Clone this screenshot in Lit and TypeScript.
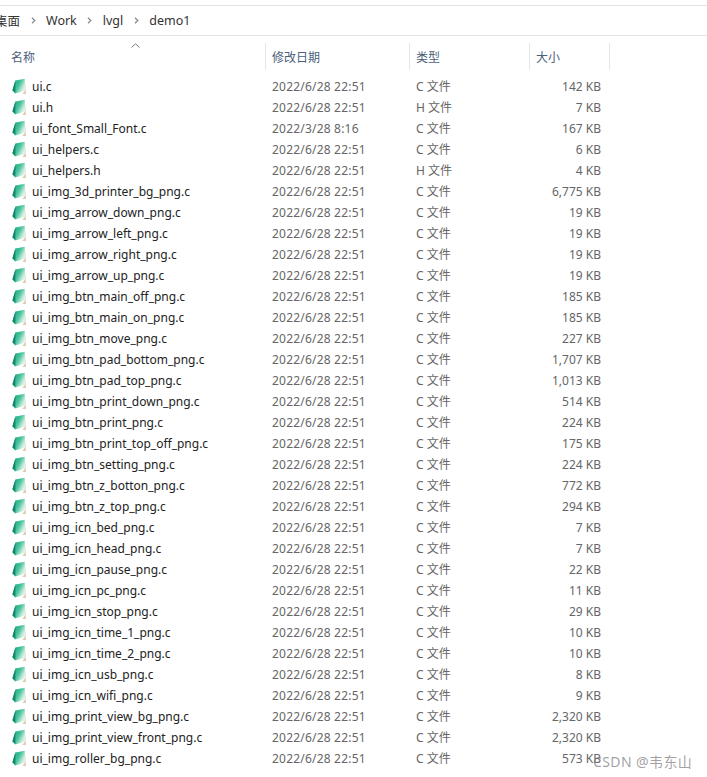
import { LitElement, html, css, svg } from "lit";
import { customElement } from "lit/decorators.js";

type Row = [string, string, string, string];
const D = "2022/6/28 22:51";
const rows: Row[] = [
  ["ui.c", D, "C 文件", "142 KB"],
  ["ui.h", D, "H 文件", "7 KB"],
  ["ui_font_Small_Font.c", "2022/3/28 8:16", "C 文件", "167 KB"],
  ["ui_helpers.c", D, "C 文件", "6 KB"],
  ["ui_helpers.h", D, "H 文件", "4 KB"],
  ["ui_img_3d_printer_bg_png.c", D, "C 文件", "6,775 KB"],
  ["ui_img_arrow_down_png.c", D, "C 文件", "19 KB"],
  ["ui_img_arrow_left_png.c", D, "C 文件", "19 KB"],
  ["ui_img_arrow_right_png.c", D, "C 文件", "19 KB"],
  ["ui_img_arrow_up_png.c", D, "C 文件", "19 KB"],
  ["ui_img_btn_main_off_png.c", D, "C 文件", "185 KB"],
  ["ui_img_btn_main_on_png.c", D, "C 文件", "185 KB"],
  ["ui_img_btn_move_png.c", D, "C 文件", "227 KB"],
  ["ui_img_btn_pad_bottom_png.c", D, "C 文件", "1,707 KB"],
  ["ui_img_btn_pad_top_png.c", D, "C 文件", "1,013 KB"],
  ["ui_img_btn_print_down_png.c", D, "C 文件", "514 KB"],
  ["ui_img_btn_print_png.c", D, "C 文件", "224 KB"],
  ["ui_img_btn_print_top_off_png.c", D, "C 文件", "175 KB"],
  ["ui_img_btn_setting_png.c", D, "C 文件", "224 KB"],
  ["ui_img_btn_z_botton_png.c", D, "C 文件", "772 KB"],
  ["ui_img_btn_z_top_png.c", D, "C 文件", "294 KB"],
  ["ui_img_icn_bed_png.c", D, "C 文件", "7 KB"],
  ["ui_img_icn_head_png.c", D, "C 文件", "7 KB"],
  ["ui_img_icn_pause_png.c", D, "C 文件", "22 KB"],
  ["ui_img_icn_pc_png.c", D, "C 文件", "11 KB"],
  ["ui_img_icn_stop_png.c", D, "C 文件", "29 KB"],
  ["ui_img_icn_time_1_png.c", D, "C 文件", "10 KB"],
  ["ui_img_icn_time_2_png.c", D, "C 文件", "10 KB"],
  ["ui_img_icn_usb_png.c", D, "C 文件", "8 KB"],
  ["ui_img_icn_wifi_png.c", D, "C 文件", "9 KB"],
  ["ui_img_print_view_bg_png.c", D, "C 文件", "2,320 KB"],
  ["ui_img_print_view_front_png.c", D, "C 文件", "2,320 KB"],
  ["ui_img_roller_bg_png.c", D, "C 文件", "573 KB"],
];

const chev = svg`<svg class="chev" width="5" height="7" viewBox="0 0 5 7"><path d="M1 .8 3.8 3.5 1 6.2" fill="none" stroke="#8a8a8a" stroke-width="1.3"/></svg>`;

const fileIcon = svg`<svg class="ico" width="15" height="17" viewBox="0 0 15 17">
  <defs><linearGradient id="g" x1="0" y1="0.3" x2="1" y2="0.9"><stop offset="0" stop-color="#17a57c"/><stop offset=".45" stop-color="#4cc6a0"/><stop offset=".75" stop-color="#c6ebdc"/><stop offset="1" stop-color="#fdfdf8"/></linearGradient></defs>
  <path d="M12.8 1.5 14 16H10.5L12.4 13Z" fill="#d9cfb4"/>
  <path d="M3.4 2.6 12.8 .8 13 12.8 3 15.4 .4 12.2Z" fill="url(#g)"/>
  <path d="M.4 12.2 3.4 2.6 3.4 15Z" fill="#15866a"/>
</svg>`;

@customElement("app-root")
export class AppRoot extends LitElement {
  static styles = css`
    :host {
      display: block;
      width: 707px;
      height: 777px;
      overflow: hidden;
      background: #fff;
      font-family: "Noto Sans", "Noto Sans CJK SC", sans-serif;
      font-size: 12px;
      color: #222;
    }
    .crumbs {
      margin-top: 5px;
      height: 29px;
      border-top: 1px solid #e3e3e3;
      border-bottom: 1px solid #e3e3e3;
      display: flex;
      align-items: center;
      gap: 10.5px;
      margin-left: -5px;
      color: #333;
      font-size: 12.5px;
    }
    .chev { flex: none; }
    .head {
      position: relative;
      height: 27px;
      margin-top: 7px;
      display: grid;
      grid-template-columns: 266px 144px 120px 80px;
      color: #4c607a;
    }
    .sort {
      position: absolute;
      left: 131px;
      top: 0;
    }
    .hc {
      padding-left: 6px;
      display: flex;
      align-items: center;
      border-right: 1px solid #e5e5e5;
    }
    .hc:first-of-type {
      padding-left: 11px;
    }
    .list {
      margin-top: 6px;
      display: flex;
      flex-direction: column;
    }
    .row {
      height: 21px;
      display: grid;
      grid-template-columns: 265px 144px 120px 72px;
      align-items: center;
      line-height: 21px;
      white-space: nowrap;
    }
    .name {
      display: flex;
      align-items: center;
      gap: 5px;
      padding-left: 12px;
    }
    .ico { flex: none; }
    .sub {
      color: #666;
      padding-left: 7px;
    }
    .date {
      letter-spacing: 0.2px;
    }
    .size {
      color: #666;
      text-align: right;
    }
    .mark {
      position: absolute;
      left: 593px;
      top: 753px;
      font-size: 14px;
      line-height: 18px;
      letter-spacing: 0.4px;
      color: rgba(120, 120, 120, 0.7);
      white-space: nowrap;
    }
  `;

  render() {
    return html`
      <div class="crumbs">
        <span>桌面</span>${chev}<span>Work</span>${chev}<span>lvgl</span>${chev}<span>demo1</span>
      </div>
      <div class="head">
        <svg class="sort" width="9" height="5" viewBox="0 0 9 5"><path d="M.5 4.5 4.5 .8 8.5 4.5" fill="none" stroke="#777"/></svg>
        <div class="hc">名称</div>
        <div class="hc">修改日期</div>
        <div class="hc">类型</div>
        <div class="hc">大小</div>
      </div>
      <div class="list">
        ${rows.map(
          (r) => html`<div class="row">
            <div class="name">${fileIcon}<span>${r[0]}</span></div>
            <div class="sub date">${r[1]}</div>
            <div class="sub">${r[2]}</div>
            <div class="size">${r[3]}</div>
          </div>`
        )}
      </div>
      <div class="mark">CSDN @韦东山</div>
    `;
  }
}
